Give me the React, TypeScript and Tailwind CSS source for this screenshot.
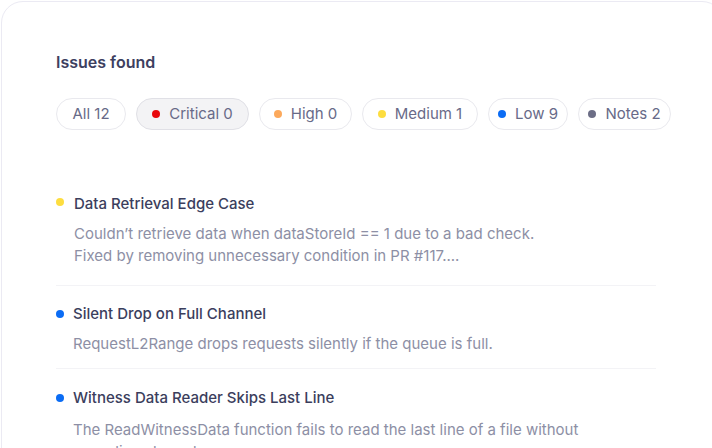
import React from "react";

const filters = [
  { label: "All 12", dot: null, active: false, w: "w-[70px]" },
  { label: "Critical 0", dot: "bg-[#e8080c]", active: true, w: "w-[113px]" },
  { label: "High 0", dot: "bg-[#fca95c]", active: false, w: "w-[93px]" },
  { label: "Medium 1", dot: "bg-[#fddd3f]", active: false, w: "w-[116px]" },
  { label: "Low 9", dot: "bg-[#0b6cf4]", active: false, w: "w-[80px]" },
  { label: "Notes 2", dot: "bg-[#6c6e86]", active: false, w: "w-[93px]" },
];

const issues = [
  {
    title: "Data Retrieval Edge Case",
    dot: "bg-[#fddd3f]",
    lines: [
      "Couldn’t retrieve data when dataStoreId == 1 due to a bad check.",
      "Fixed by removing unnecessary condition in PR #117....",
    ],
    pad: "pt-0 pb-[18px]",
    dotPos: "mt-[5px]",
    descGap: "mt-2",
    gap: "gap-[10px]",
  },
  {
    title: "Silent Drop on Full Channel",
    dot: "bg-[#0b6cf4]",
    lines: ["RequestL2Range drops requests silently if the queue is full."],
    pad: "pt-[17px] pb-[13px]",
    dotPos: "mt-[7px]",
    descGap: "mt-2",
    gap: "gap-[9px]",
  },
  {
    title: "Witness Data Reader Skips Last Line",
    dot: "bg-[#0b6cf4]",
    lines: [
      "The ReadWitnessData function fails to read the last line of a file without",
      "a newline character.",
    ],
    pad: "pt-[18px] pb-4",
    dotPos: "mt-[7px]",
    descGap: "mt-[10px]",
    gap: "gap-[9px]",
  },
];

export default function App() {
  return (
    <div className="h-[448px] w-[712px] overflow-hidden bg-white font-['Inter',sans-serif]">
      <div className="ml-px mt-px h-[480px] w-[723px] rounded-[22px] border border-[#ebeaf3] bg-white pl-[54px] pt-[48px]">
        <h2 className="text-[16px] font-semibold leading-6 text-[#3d405f]">Issues found</h2>

        <div className="mt-[24px] flex gap-[10px]">
          {filters.map((f) => (
            <div
              key={f.label}
              className={`flex h-8 shrink-0 items-center justify-center gap-[9px] rounded-full border text-[15px] text-[#686a88] ${f.w} ${
                f.active ? "border-[#e0e0e6] bg-[#f3f3f5]" : "border-[#e9e9ee] bg-white"
              }`}
            >
              {f.dot && <span className={`h-2 w-2 rounded-full ${f.dot}`} />}
              <span>{f.label}</span>
            </div>
          ))}
        </div>

        <div className="mt-[63px] w-[600px]">
          {issues.map((issue, i) => (
            <div key={issue.title} className={i > 0 ? "border-t border-[#f3f3f6]" : ""}>
              <div className={`flex ${issue.gap} ${issue.pad}`}>
                <span className={`h-2 w-2 shrink-0 rounded-full ${issue.dot} ${issue.dotPos}`} />
                <div>
                  <div className="text-[15px] font-medium leading-[22px] text-[#3b3e5d]">{issue.title}</div>
                  <p className={`${issue.descGap} text-[15px] leading-[22px] text-[#8d8fa5]`}>
                    {issue.lines.map((l, j) => (
                      <React.Fragment key={j}>
                        {j > 0 && <br />}
                        {l}
                      </React.Fragment>
                    ))}
                  </p>
                </div>
              </div>
            </div>
          ))}
        </div>
      </div>
    </div>
  );
}
